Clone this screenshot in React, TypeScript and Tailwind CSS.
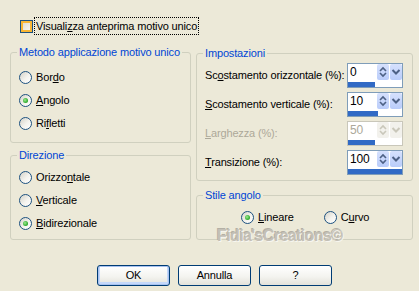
import type { ReactNode } from "react";

function Radio({ checked }: { checked?: boolean }) {
  return (
    <span className="flex h-[13px] w-[13px] shrink-0 items-center justify-center rounded-full border border-[#1C5180] bg-[linear-gradient(135deg,#D4D2C8_0%,#F4F3EE_55%,#FFFFFF_100%)]">
      {checked && <span className="h-[5px] w-[5px] rounded-full bg-[radial-gradient(circle_at_40%_40%,#9BEA8F,#21A121_75%)]" />}
    </span>
  );
}

function RadioRow({ checked, children }: { checked?: boolean; children: ReactNode }) {
  return (
    <div className="flex h-[13px] items-center gap-[4px]">
      <Radio checked={checked} />
      <span className="leading-[13px]">{children}</span>
    </div>
  );
}

function Group({ title, className, children }: { title: string; className: string; children: ReactNode }) {
  return (
    <div className={`flex flex-col rounded-[3px] border border-[#D0D0BF] ${className}`}>
      <span className="-mt-[7px] ml-[6px] h-[13px] w-fit bg-[#ECE9D8] px-[2px] leading-[13px] text-[#0046D5]">{title}</span>
      {children}
    </div>
  );
}

function SpinBtn({ disabled, children }: { disabled?: boolean; children: ReactNode }) {
  return (
    <span
      className={`flex h-[16px] w-[12px] items-center justify-center rounded-[2px] ${
        disabled ? "bg-[#F2F1EC] text-[#C9C7BA]" : "bg-[linear-gradient(#D6E1FD,#B9CCFA)] text-[#4D6185]"
      }`}
    >
      {children}
    </span>
  );
}

function Spin({ value, fill, disabled }: { value: string; fill: number; disabled?: boolean }) {
  return (
    <div className={`flex h-[25px] w-[56px] flex-col border bg-white ${disabled ? "border-[#C9C7BA]" : "border-[#7F9DB9]"}`}>
      <div className="flex h-[17px] items-start">
        <span className={`flex-1 pl-[2px] text-[12px] leading-[17px] ${disabled ? "text-[#ACA899]" : "text-black"}`}>{value}</span>
        <SpinBtn disabled={disabled}>
          <svg width="12" height="16" viewBox="0 0 12 16" fill="none" stroke="currentColor" strokeWidth="1.6">
            <path d="M3 7 L6 4 L9 7" />
            <path d="M3 9 L6 12 L9 9" />
          </svg>
        </SpinBtn>
        <span className="w-px" />
        <SpinBtn disabled={disabled}>
          <svg width="12" height="16" viewBox="0 0 12 16" fill="none" stroke="currentColor" strokeWidth="2">
            <path d="M2.5 6 L6 9.5 L9.5 6" />
          </svg>
        </SpinBtn>
      </div>
      <div className="mt-[1px] h-[5px]">
        <div className="h-full bg-[#316AC5]" style={{ width: fill }} />
      </div>
    </div>
  );
}

function Row({ label, value, fill, disabled }: { label: ReactNode; value: string; fill: number; disabled?: boolean }) {
  return (
    <div className="flex h-[25px] items-center justify-between pl-[8px] pr-[9px]">
      <span className={disabled ? "text-[#ACA899]" : "text-black"}>{label}</span>
      <Spin value={value} fill={fill} disabled={disabled} />
    </div>
  );
}

function Btn({ children, def }: { children: ReactNode; def?: boolean }) {
  return (
    <button
      className={`h-[21px] w-[73px] rounded-[3px] border border-[#003C74] bg-[linear-gradient(#FFFFFF,#F4F4F0_55%,#E3E2DA)] text-[11px] leading-none text-black ${
        def ? "shadow-[inset_0_0_0_1px_#A8C2F0,inset_0_-1px_0_2px_#C4D8FA]" : ""
      }`}
    >
      {children}
    </button>
  );
}

export default function App() {
  return (
    <div className="relative flex h-[291px] w-[419px] flex-col overflow-hidden bg-[#ECE9D8] font-['Liberation_Sans',Arial,sans-serif] text-[11px] tracking-[-0.15px] text-black">
      <div className="ml-[20px] mt-[17px] flex h-[18px] items-center gap-[1px]">
        <span className="flex h-[13px] w-[13px] items-center justify-center border border-[#1C5180] bg-white">
          <span className="h-[11px] w-[11px] border-2 border-[#F8B636] bg-[linear-gradient(135deg,#E0DED4,#F6F5F0)]" />
        </span>
        <span className="h-[18px] px-[2px] leading-[18px] outline outline-1 -outline-offset-1 outline-dotted outline-black">
          Visuali<u>z</u>za anteprima motivo unico
        </span>
      </div>

      <div className="ml-[10px] mt-[17px] flex gap-[5px]">
        <div className="flex w-[181px] flex-col">
          <Group title="Metodo applicazione motivo unico" className="h-[91px]">
            <div className="flex flex-col gap-[10px] pl-[8px] pt-[12px]">
              <RadioRow>
                Bor<u>d</u>o
              </RadioRow>
              <RadioRow checked>
                <u>A</u>ngolo
              </RadioRow>
              <RadioRow>
                Ri<u>f</u>letti
              </RadioRow>
            </div>
          </Group>
          <Group title="Direzione" className="mt-[12px] h-[85px]">
            <div className="flex flex-col gap-[10px] pl-[8px] pt-[9px]">
              <RadioRow>
                Orizzo<u>n</u>tale
              </RadioRow>
              <RadioRow>
                <u>V</u>erticale
              </RadioRow>
              <RadioRow checked>
                <u>B</u>idirezionale
              </RadioRow>
            </div>
          </Group>
        </div>

        <div className="mt-[1px] flex w-[217px] flex-col">
          <Group title="Impostazioni" className="h-[128px]">
            <div className="flex flex-col gap-[4px] pt-[3px]">
              <Row label={<>Sc<u>o</u>stamento orizzontale (%):</>} value="0" fill={27} />
              <Row label={<><u>S</u>costamento verticale (%):</>} value="10" fill={30} />
              <Row label={<><u>L</u>arghezza (%):</>} value="50" fill={27} disabled />
              <Row label={<><u>T</u>ransizione (%):</>} value="100" fill={54} />
            </div>
          </Group>
          <Group title="Stile angolo" className="mt-[14px] h-[45px]">
            <div className="flex gap-[30px] pl-[44px] pt-[9px]">
              <RadioRow checked>
                <u>L</u>ineare
              </RadioRow>
              <RadioRow>
                C<u>u</u>rvo
              </RadioRow>
            </div>
          </Group>
        </div>
      </div>

      <div className="ml-[97px] mt-[25px] flex gap-[8px]">
        <Btn def>OK</Btn>
        <Btn>Annulla</Btn>
        <Btn>?</Btn>
      </div>

      <span className="absolute left-[217px] top-[224px] text-[16px] font-bold tracking-[-0.6px] text-[#C4C0B6] [text-shadow:1px_1px_0_#F7F6F0,-1px_-1px_0_#B4B0A5]">
        Fidia'sCreations©
      </span>
    </div>
  );
}
